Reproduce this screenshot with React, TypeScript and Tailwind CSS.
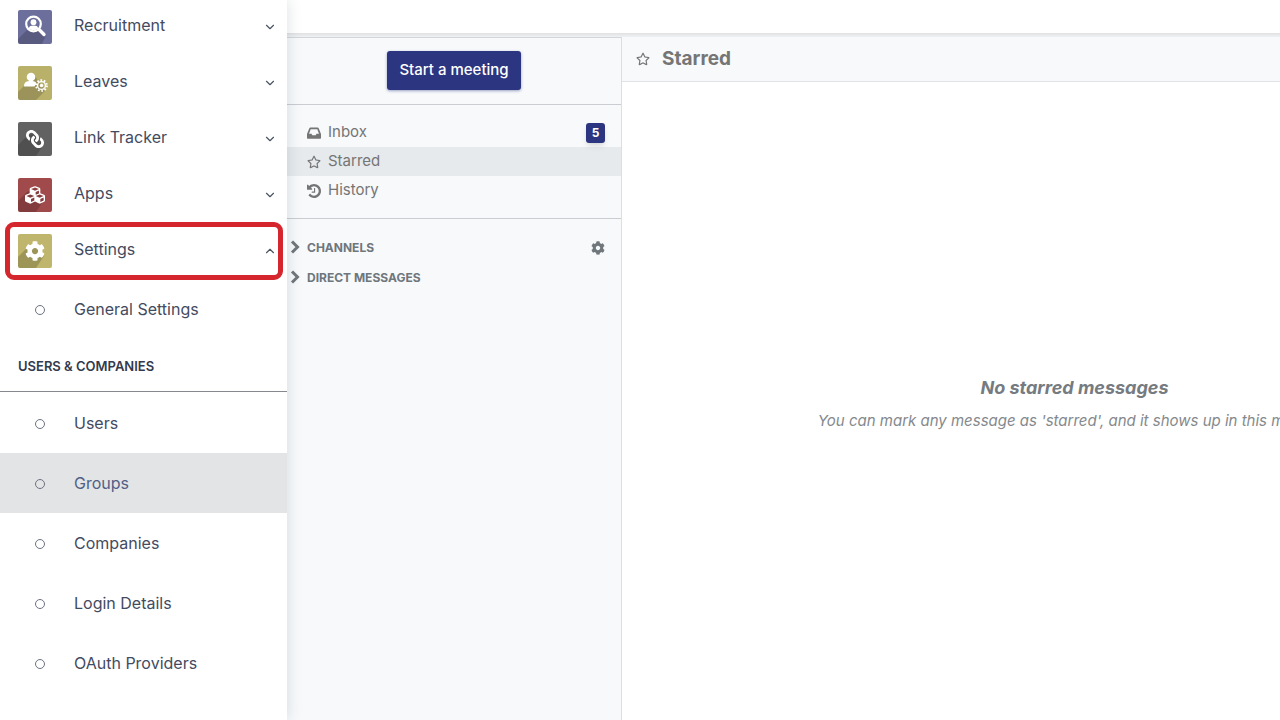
import React from 'react';
import { FaCog, FaCubes, FaLink, FaRegStar } from 'react-icons/fa';
import { ChevronDown, ChevronUp } from 'lucide-react';

type IconProps = { className?: string };

type AppItem = {
  label: string;
  tile: string;
  icon: React.ReactNode;
  open?: boolean;
};

const RecruitmentIcon = () => (
  <svg viewBox="0 0 34 34" className="absolute inset-0 size-full" aria-hidden="true">
    <path d="M10 19 L0 29 V34 H24 L28 25 L20 17 Z" fill="#000" opacity="0.18" />
    <circle cx="15.500" cy="14" r="7.300" fill="none" stroke="#fff" strokeWidth="2.200" />
    <path d="M21 19.500 L26 24.500" stroke="#fff" strokeWidth="3.400" strokeLinecap="round" />
    <circle cx="15.500" cy="12.200" r="2.900" fill="#fff" />
    <path d="M10.800 18.500 C11 16 13 15.400 15.500 15.400 C18 15.400 20 16 20.200 18.500 C18.500 20.800 12.500 20.800 10.800 18.500 Z" fill="#fff" />
  </svg>
);

const LeavesIcon = () => (
  <svg viewBox="0 0 34 34" className="absolute inset-0 size-full" aria-hidden="true">
    <path d="M6 20 L0 26 V34 H18 L27 25 L17 10 Z" fill="#000" opacity="0.16" />
    <circle cx="13" cy="11" r="4.300" fill="#fff" />
    <path d="M6 20.500 C6 16 8.500 15 13 15 C17 15 18.500 16 18 18 L16.500 20.500 Z" fill="#fff" />
    <circle cx="23.500" cy="19.500" r="3.900" fill="none" stroke="#fff" strokeWidth="1.400" />
    <circle cx="23.500" cy="19.500" r="5.400" fill="none" stroke="#fff" strokeWidth="1.900" strokeDasharray="1.700 1.693" />
    <circle cx="23.500" cy="19.500" r="1.700" fill="#fff" />
  </svg>
);

const LongShadow = () => (
  <svg viewBox="0 0 34 34" className="absolute inset-0 size-full" aria-hidden="true">
    <path d="M9 14 L0 23 V34 H18 L26 22 L18 10 Z" fill="#000" opacity="0.18" />
  </svg>
);

const InboxIcon = ({ className }: IconProps) => (
  <svg viewBox="0 0 14 14" className={className} fill="currentColor" aria-hidden="true">
    <path
      fillRule="evenodd"
      d="M3.400 1.500 H10.600 C11.100 1.500 11.500 1.800 11.700 2.200 L13.700 7.200 C13.900 7.600 14 8 14 8.400 V12 C14 12.400 13.700 12.700 13.300 12.700 H0.700 C0.300 12.700 0 12.400 0 12 V8.400 C0 8 0.100 7.600 0.300 7.200 L2.300 2.200 C2.500 1.800 2.900 1.500 3.400 1.500 Z M3.700 3.300 L2 7.700 H4.500 L5.300 9.300 H8.700 L9.500 7.700 H12 L10.300 3.300 Z"
    />
  </svg>
);

const HistoryIcon = ({ className }: IconProps) => (
  <svg viewBox="0 128 1536 1536" className={className} fill="currentColor" aria-hidden="true">
    <path d="M1536 896q0 156-61 298t-164 245-245 164-298 61q-172 0-327-72.500t-264-204.500q-7-10-6.500-22.500t8.500-20.500l137-138q10-9 25-9 16 2 23 12 73 95 179 147t225 52q104 0 198.500-40.500t163.500-109.500 109.500-163.500 40.500-198.500-40.500-198.500-109.500-163.500-163.500-109.500-198.500-40.500q-98 0-188 35.500t-160 101.500l137 138q31 30 14 69-17 40-59 40h-448q-26 0-45-19t-19-45v-448q0-42 40-59 39-17 69 14l130 129q107-101 244.500-156.500t284.500-55.500q156 0 298 61t245 164 164 245 61 298zm-640-288v448q0 14-9 23t-23 9h-320q-14 0-23-9t-9-23v-64q0-14 9-23t23-9h224v-352q0-14 9-23t23-9h64q14 0 23 9t9 23z" />
  </svg>
);

const SectionChevron = () => (
  <svg viewBox="0 0 12 14" className="mb-0.5 h-3.5 w-3" fill="none" stroke="currentColor" strokeWidth="3" aria-hidden="true">
    <path d="M2 1.500 L7.500 7 L2 12.500" />
  </svg>
);

const apps: AppItem[] = [
  { label: 'Recruitment', tile: 'bg-[#6c6f9b]', icon: <RecruitmentIcon /> },
  { label: 'Leaves', tile: 'bg-[#b9b06a]', icon: <LeavesIcon /> },
  {
    label: 'Link Tracker',
    tile: 'bg-[#626262]',
    icon: (
      <>
        <LongShadow />
        <FaLink className="relative size-[18px] -scale-x-100" />
      </>
    ),
  },
  {
    label: 'Apps',
    tile: 'bg-[#a04a4b]',
    icon: (
      <>
        <LongShadow />
        <FaCubes className="relative size-5" />
      </>
    ),
  },
  {
    label: 'Settings',
    tile: 'bg-[#c0b56c]',
    open: true,
    icon: (
      <>
        <LongShadow />
        <FaCog className="relative size-5" />
      </>
    ),
  },
];

const companyLinks = ['Users', 'Groups', 'Companies', 'Login Details', 'OAuth Providers'];

const mailboxes = [
  { label: 'Inbox', icon: InboxIcon, count: 5 },
  { label: 'Starred', icon: FaRegStar, active: true },
  { label: 'History', icon: HistoryIcon },
];

const AppRow = ({ item }: { item: AppItem }) => {
  const Chevron = item.open ? ChevronUp : ChevronDown;
  return (
    <li className="relative">
      <button
        type="button"
        aria-expanded={Boolean(item.open)}
        className="flex h-14 w-full items-center pr-2.5 pl-[18px] text-left"
      >
        <span
          className={`relative flex size-[34px] items-center justify-center overflow-hidden rounded-[2px] text-white ${item.tile}`}
        >
          {item.icon}
        </span>
        <span className="ml-[22px] flex-1 pb-1">{item.label}</span>
        <Chevron className="size-3.5 text-[#4b5563]" strokeWidth={2} />
      </button>
      {item.open && (
        <span className="pointer-events-none absolute -top-px right-1 -bottom-px left-[5px] rounded-[9px] border-[5px] border-[#d4262c]" />
      )}
    </li>
  );
};

const SubLink = ({ label, active }: { label: string; active?: boolean }) => (
  <li>
    <a
      href="#"
      className={`flex h-[60px] items-center pl-[35px] ${active ? 'bg-[#e2e4e6] text-[#515f87]' : ''}`}
    >
      <span className="mt-0.5 size-2.5 rounded-full border border-[#6b7280]" />
      <span className="ml-[29px]">{label}</span>
    </a>
  </li>
);

const AppSidebar = () => (
  <nav className="relative z-10 w-[287px] shrink-0 bg-white text-base text-[#434b5f] shadow-[0_0_14px_rgba(60,70,90,0.18)]">
    <ul className="-mt-px">
      {apps.map((item) => (
        <AppRow key={item.label} item={item} />
      ))}
      <SubLink label="General Settings" />
    </ul>
    <h2 className="flex h-[53px] items-center border-b border-[#85888c] pt-1 pl-[18px] text-[13px] font-semibold text-[#333a4d]">
      USERS &amp; COMPANIES
    </h2>
    <ul className="py-px">
      {companyLinks.map((label) => (
        <SubLink key={label} label={label} active={label === 'Groups'} />
      ))}
    </ul>
  </nav>
);

const DiscussSidebar = () => (
  <aside className="w-[335px] shrink-0 border-t border-r border-t-[#d3d6d8] border-r-[#dcdfe2] bg-[#f7f9fb] text-[#757575]">
    <div className="flex h-[67px] items-center justify-center border-b border-[#c9ccd0] pb-0.5">
      <button
        type="button"
        className="h-[39px] rounded-[3px] bg-[#2b3580] px-3 text-[15px] font-medium text-white shadow-[0_1px_3px_rgba(43,53,128,0.45)]"
      >
        Start a meeting
      </button>
    </div>
    <ul className="border-b border-[#c9ccd0] py-[13px] text-[15px]">
      {mailboxes.map(({ label, icon: Icon, count, active }) => (
        <li key={label}>
          <a href="#" className={`flex h-[29px] items-center pr-4 pl-5 ${active ? 'bg-[#e6eaed]' : ''}`}>
            <Icon className="size-3.5" />
            <span className="ml-[7px] flex-1">{label}</span>
            {count && (
              <span className="flex h-5 w-[19px] items-center justify-center rounded-[3px] bg-[#2b3580] text-xs font-bold text-white shadow-md">
                {count}
              </span>
            )}
          </a>
        </li>
      ))}
    </ul>
    <div className="pt-3.5 pl-[3px] text-xs font-bold text-[#6f767c]">
      <div className="flex h-[30px] items-center pr-4">
        <button type="button" className="flex flex-1 items-center text-left">
          <SectionChevron />
          <span className="ml-[5px]">CHANNELS</span>
        </button>
        <button type="button" aria-label="Channel settings">
          <FaCog className="size-3.5" />
        </button>
      </div>
      <button type="button" className="flex h-[30px] w-full items-center text-left">
        <SectionChevron />
        <span className="ml-[5px]">DIRECT MESSAGES</span>
      </button>
    </div>
  </aside>
);

const StarredPane = () => (
  <main className="flex min-w-[905px] flex-1 flex-col">
    <header className="flex h-[45px] shrink-0 items-center border-b border-[#e1e4e7] bg-[#f7f9fb] pl-3.5 text-[#757575]">
      <FaRegStar className="size-3.5" />
      <h1 className="ml-3 text-[19px] font-bold">Starred</h1>
    </header>
    <div className="flex flex-1 flex-col items-center justify-center gap-2 pt-1 text-[#757b80] italic">
      <p className="text-lg font-bold">No starred messages</p>
      <p className="text-[15px] text-[#84898d]">
        You can mark any message as &apos;starred&apos;, and it shows up in this mailbox.
      </p>
    </div>
  </main>
);

export default function App() {
  return (
    <div className="flex h-screen overflow-hidden bg-white font-['Inter',sans-serif]">
      <AppSidebar />
      <div className="flex flex-1 flex-col">
        <div className="h-[33px] shrink-0 bg-white" />
        <div className="h-1 shrink-0 bg-gradient-to-b from-[#dfe1e3] to-[#eff1f3]" />
        <div className="flex flex-1">
          <DiscussSidebar />
          <StarredPane />
        </div>
      </div>
    </div>
  );
}
